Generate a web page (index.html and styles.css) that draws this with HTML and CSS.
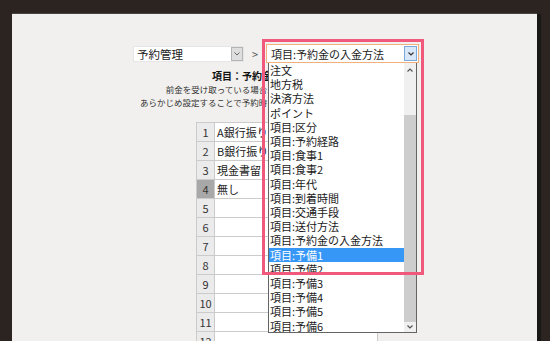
FILE: index.html
```html
<!DOCTYPE html>
<html lang="ja">
<head>
<meta charset="utf-8">
<link rel="stylesheet" href="styles.css">
</head>
<body>
<div class="panel">
  <div class="toolbar">
    <div class="select sel1">
      <span class="sel-text">予約管理</span>
      <span class="sel-btn gray"><svg width="8" height="6" viewBox="0 0 8 6"><polyline points="1.5,1.5 4,4 6.5,1.5" fill="none" stroke="#666" stroke-width="1"/></svg></span>
    </div>
    <span class="sep">&gt;</span>
    <div class="combo">
      <div class="select sel2">
        <span class="sel-text">項目:予約金の入金方法</span>
        <span class="sel-btn blue"><svg width="8" height="6" viewBox="0 0 8 6"><polyline points="1.5,1.5 4,4 6.5,1.5" fill="none" stroke="#333" stroke-width="1.2"/></svg></span>
      </div>
      <div class="dropdown">
        <ul class="options">
          <li>注文</li>
          <li>地方税</li>
          <li>決済方法</li>
          <li>ポイント</li>
          <li>項目:区分</li>
          <li>項目:予約経路</li>
          <li>項目:食事1</li>
          <li>項目:食事2</li>
          <li>項目:年代</li>
          <li>項目:到着時間</li>
          <li>項目:交通手段</li>
          <li>項目:送付方法</li>
          <li>項目:予約金の入金方法</li>
          <li class="active">項目:予備1</li>
          <li>項目:予備2</li>
          <li>項目:予備3</li>
          <li>項目:予備4</li>
          <li>項目:予備5</li>
          <li>項目:予備6</li>
        </ul>
        <div class="scrollbar">
          <span class="sb-btn up"><svg width="8" height="6" viewBox="0 0 8 6"><polyline points="1.5,4.5 4,2 6.5,4.5" fill="none" stroke="#555" stroke-width="1.2"/></svg></span>
          <div class="sb-track"><div class="sb-thumb"></div></div>
          <span class="sb-btn down"><svg width="8" height="6" viewBox="0 0 8 6"><polyline points="1.5,1.5 4,4 6.5,1.5" fill="none" stroke="#555" stroke-width="1.2"/></svg></span>
        </div>
      </div>
      <div class="highlight"></div>
    </div>
  </div>
  <h1 class="title">項目：予約金の入金方法</h1>
  <p class="desc">前金を受け取っている場合、入金方法を設定します。<br>あらかじめ設定することで予約時に入金方法をすぐ選択できます。</p>
  <table class="items">
    <tr><td class="num">1</td><td class="val">A銀行振り込み</td></tr>
    <tr><td class="num">2</td><td class="val">B銀行振り込み</td></tr>
    <tr><td class="num">3</td><td class="val">現金書留</td></tr>
    <tr><td class="num sel">4</td><td class="val">無し</td></tr>
    <tr><td class="num">5</td><td class="val"></td></tr>
    <tr><td class="num">6</td><td class="val"></td></tr>
    <tr><td class="num">7</td><td class="val"></td></tr>
    <tr><td class="num">8</td><td class="val"></td></tr>
    <tr><td class="num">9</td><td class="val"></td></tr>
    <tr><td class="num">10</td><td class="val"></td></tr>
    <tr><td class="num">11</td><td class="val"></td></tr>
    <tr><td class="num">12</td><td class="val"></td></tr>
  </table>
</div>
</body>
</html>
```
FILE: styles.css
```css
html, body {
  margin: 0;
  padding: 0;
}
body {
  width: 550px;
  height: 341px;
  overflow: hidden;
  background: #2c2420;
  font-family: "Noto Sans CJK JP", "Noto Sans", sans-serif;
  color: #222;
}
.panel {
  margin: 14px 0 0 12px;
  width: 525px;
  min-height: 420px;
  background: #f1f0ee;
  box-shadow: 4px 0 0 #1a1817, 0 -1px 0 #4a4440;
  padding-top: 30px;
  box-sizing: border-box;
}
.toolbar {
  display: flex;
  align-items: center;
  padding-left: 121px;
  height: 19px;
}
.select {
  display: flex;
  align-items: stretch;
  box-sizing: border-box;
  background: #fff;
  font-size: 11px;
  line-height: 14px;
}
.sel-text {
  flex: 1;
  display: flex;
  align-items: center;
  white-space: nowrap;
  overflow: hidden;
}
.sel-btn {
  display: flex;
  align-items: center;
  justify-content: center;
  box-sizing: border-box;
}
.sel1 {
  width: 111px;
  height: 16px;
  border: 1px solid #e6e6e6;
}
.sel1 .sel-text {
  padding-left: 3px;
  font-size: 11.5px;
}
.sel1 .sel-btn {
  width: 12px;
  background: #dedede;
  border: 1px solid #b4b4b4;
}
.sep {
  width: 22px;
  text-align: center;
  font-size: 11px;
  color: #555;
  line-height: 14px;
}
.combo {
  position: relative;
  width: 153px;
  height: 19px;
}
.sel2 {
  width: 153px;
  height: 19px;
  border: 1px solid #f2b07e;
}
.sel2 .sel-text {
  padding-left: 4px;
}
.sel2 .sel-btn {
  width: 13px;
  margin: 1px 1px 1px 0;
  background: #d9e8f8;
  border: 1px solid #7ba9dc;
}
.dropdown {
  position: absolute;
  left: 2px;
  top: 19px;
  width: 149px;
  height: 270px;
  box-sizing: border-box;
  border: 1px solid #646464;
  border-top: none;
  background: #fff;
  display: flex;
  overflow: hidden;
  z-index: 2;
}
.options {
  list-style: none;
  margin: 0;
  padding: 0;
  flex: 1;
  font-size: 11px;
  line-height: 14.2px;
  overflow: hidden;
}
.options li {
  padding-left: 1px;
  white-space: nowrap;
  color: #1a1a1a;
}
.options li.active {
  background: #3797f7;
  color: #fff;
}
.scrollbar {
  width: 12px;
  background: #f0f0f0;
  display: flex;
  flex-direction: column;
}
.sb-btn {
  display: flex;
  align-items: center;
  justify-content: center;
}
.sb-btn.up { height: 14px; }
.sb-btn.down { height: 10px; }
.sb-track {
  flex: 1;
}
.sb-thumb {
  margin-top: 38px;
  height: 207px;
  background: #cdcdcd;
}
.highlight {
  position: absolute;
  left: -4px;
  top: -5px;
  width: 162px;
  height: 236px;
  box-sizing: border-box;
  border: 3px solid #f0587c;
  z-index: 3;
}
.title {
  margin: 5.5px 15px 0 0;
  text-align: center;
  font-size: 10px;
  line-height: 14px;
  font-weight: bold;
  color: #111;
}
.desc {
  margin: 0 15px 0 0;
  text-align: center;
  font-size: 8.5px;
  line-height: 13.5px;
  color: #333;
}
.items {
  margin: 12.5px 0 0 184px;
  border-collapse: collapse;
  font-size: 11px;
}
.items td {
  height: 18px;
  padding: 0;
  border: 1px solid #cbcbcb;
  line-height: 14px;
}
.items .num {
  width: 17px;
  text-align: center;
  background: #ebebeb;
  color: #333;
}
.items .num.sel {
  background: #a8a8a8;
}
.items .val {
  width: 160px;
  background: #fff;
  padding-left: 2px;
  white-space: nowrap;
}
```
